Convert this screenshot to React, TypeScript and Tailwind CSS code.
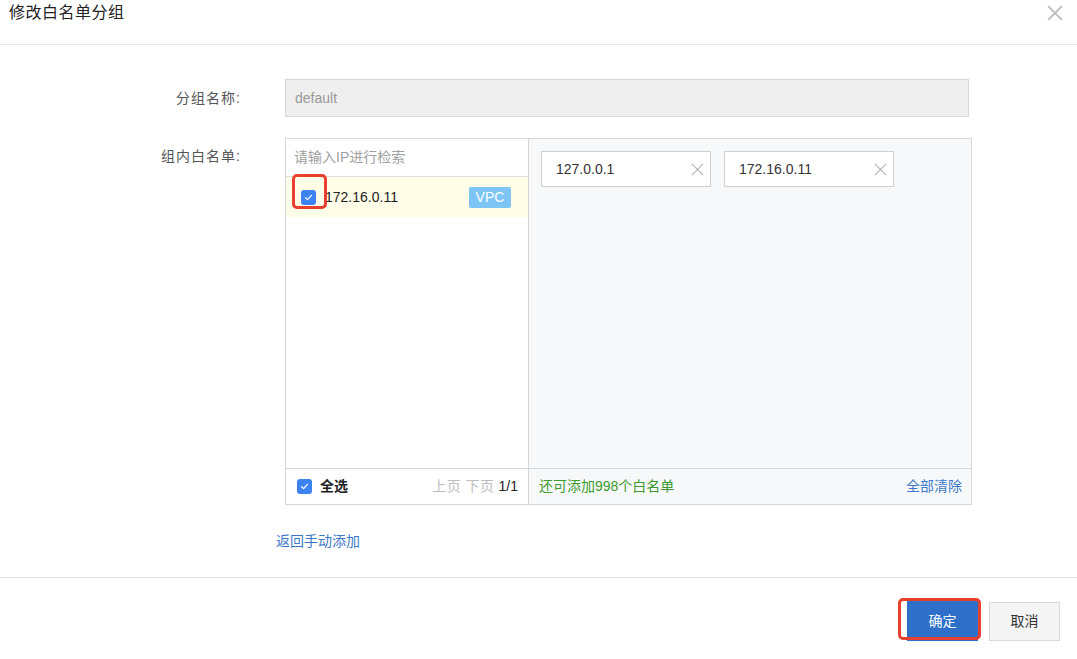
import React from "react";

const font = { fontFamily: '"Liberation Sans", "Noto Sans CJK SC", sans-serif' };

function Check({ size = 15 }: { size?: number }) {
  return (
    <span
      className="inline-flex items-center justify-center rounded-[3px] bg-[#3c82f0]"
      style={{ width: size, height: size }}
    >
      <svg width="9" height="9" viewBox="0 0 10 10" fill="none">
        <path d="M1.8 5.2 L4 7.4 L8.3 2.6" stroke="white" strokeWidth="1.4" strokeLinecap="round" strokeLinejoin="round" />
      </svg>
    </span>
  );
}

function XIcon({ size = 13, color = "#b5b5b5", w = 1.3 }: { size?: number; color?: string; w?: number }) {
  return (
    <svg width={size} height={size} viewBox="0 0 14 14" fill="none">
      <path d="M1 1 L13 13 M13 1 L1 13" stroke={color} strokeWidth={w} />
    </svg>
  );
}

function Tag({ text }: { text: string }) {
  return (
    <div className="flex h-[36px] w-[170px] items-center justify-between border border-[#cfcfcf] bg-white pl-[14px] pr-[6px] text-[14px] text-[#333]">
      <span>{text}</span>
      <XIcon />
    </div>
  );
}

export default function App() {
  return (
    <div className="relative h-[659px] w-[1077px] overflow-hidden bg-white text-[#333]" style={font}>
      {/* header */}
      <div className="flex h-[45px] items-start justify-between border-b border-[#e6e6e6] pl-[9px] pr-[14px] pt-[3px]">
        <div className="text-[16px] leading-[20px] tracking-[0.5px] text-[#222]">修改白名单分组</div>
        <div className="pt-[2px]">
          <XIcon size={16} color="#bdbdbd" w={1.8} />
        </div>
      </div>

      {/* body */}
      <div className="pt-[34px]">
        <div className="flex items-center">
          <div className="w-[241px] text-right text-[14px] tracking-[1px] text-[#555]">分组名称:</div>
          <div className="ml-[44px] flex h-[38px] w-[684px] items-center border border-[#d8d8d8] bg-[#efefef] px-[9px] text-[14px] text-[#999]">
            default
          </div>
        </div>

        <div className="mt-[21px] flex items-start">
          <div className="w-[241px] pt-[8px] text-right text-[14px] tracking-[1px] text-[#555]">组内白名单:</div>
          <div className="ml-[44px] flex h-[367px] w-[687px] border border-[#d6d6d6]">
            {/* left */}
            <div className="flex w-[243px] flex-col border-r border-[#d6d6d6] bg-white">
              <div className="flex h-[38px] items-center border-b border-[#dedede] px-[8px] text-[14px] text-[#a0a0a0]">
                请输入IP进行检索
              </div>
              <div className="relative flex h-[40px] items-center bg-[#fffde8] pl-[15px] pr-[17px]">
                <Check />
                <span className="ml-[9px] text-[14px] text-[#222]">172.16.0.11</span>
                <span className="ml-auto flex h-[21px] w-[42px] items-center justify-center rounded-[2px] bg-[#7cc5f5] text-[14px] text-white">
                  VPC
                </span>
                <div className="absolute left-[6px] top-[-3px] h-[35px] w-[35px] rounded-[5px] border-[3px] border-[#e8402f]" />
              </div>
              <div className="flex-1" />
              <div className="flex h-[36px] items-center border-t border-[#d6d6d6] pl-[11px] pr-[10px]">
                <Check />
                <span className="ml-[8px] text-[14px] font-bold text-[#222]">全选</span>
                <span className="ml-auto text-[14px] tracking-[0.5px] text-[#bdbdbd]">上页 下页</span>
                <span className="ml-[4px] text-[14px] text-[#222]">1/1</span>
              </div>
            </div>
            {/* right */}
            <div className="flex flex-1 flex-col bg-[#f7f8fa]">
              <div className="flex gap-[13px] pl-[12px] pt-[12px]">
                <Tag text="127.0.0.1" />
                <Tag text="172.16.0.11" />
              </div>
              <div className="flex-1" />
              <div className="flex h-[36px] items-center justify-between border-t border-[#d6d6d6] pl-[10px] pr-[9px] text-[14px]">
                <span className="text-[#3c9a2c]">还可添加998个白名单</span>
                <span className="text-[#3b78c8]">全部清除</span>
              </div>
            </div>
          </div>
        </div>

        <div className="ml-[276px] mt-[26px] text-[14px] leading-[20px] text-[#3b78c8]">返回手动添加</div>
      </div>

      {/* footer */}
      <div className="absolute bottom-0 left-0 right-0 top-[577px] border-t border-[#e3e3e3]">
        <div className="flex justify-end gap-[11px] pr-[17px] pt-[23px]">
          <div className="relative">
            <div className="flex h-[40px] w-[71px] items-center justify-center bg-[#2e6fc9] text-[14px] text-white">确定</div>
            <div className="absolute left-[-9px] top-[-3px] h-[42px] w-[83px] rounded-[5px] border-[3px] border-[#e8402f]" />
          </div>
          <div className="mt-[1px] flex h-[39px] w-[71px] items-center justify-center border border-[#d9d9d9] bg-[#f4f4f4] text-[14px] text-[#333]">
            取消
          </div>
        </div>
      </div>
    </div>
  );
}
